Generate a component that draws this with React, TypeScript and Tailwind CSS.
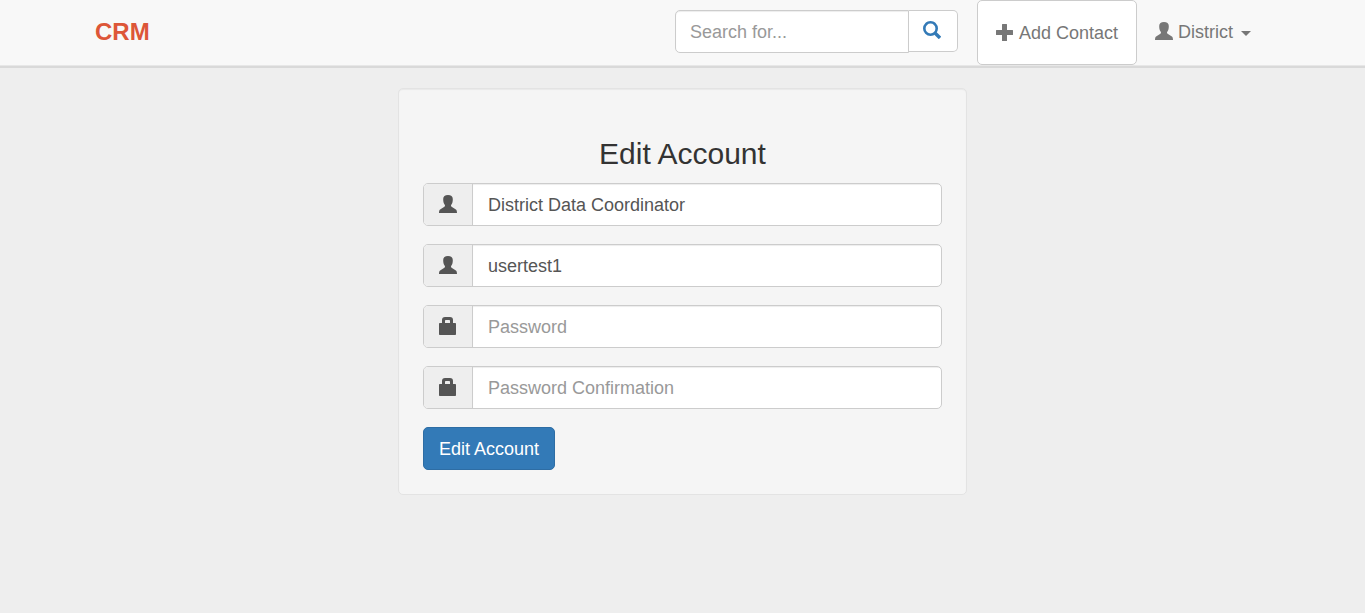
import React from "react";

type IconProps = { className?: string };

function UserIcon({ className = "" }: IconProps) {
  return (
    <svg viewBox="0 0 18 18" className={`size-[18px] shrink-0 ${className}`} fill="currentColor" aria-hidden="true">
      <path d="M9 0C6 0 4.200 1.300 4.200 4c0 2.600.3 4.300 1.500 5.700.5.700.4 1.500-.3 2L1.500 14.200C.4 14.900 0 15.800 0 18h18c0-2.200-.4-3.100-1.500-3.800l-3.900-2.500c-.7-.5-.8-1.300-.3-2 1.200-1.400 1.500-3.100 1.500-5.700C13.800 1.300 12 0 9 0Z" />
    </svg>
  );
}

function LockIcon({ className = "" }: IconProps) {
  return (
    <svg viewBox="0 0 18 18" className={`size-[18px] shrink-0 ${className}`} fill="currentColor" aria-hidden="true">
      <path
        fillRule="evenodd"
        d="M3 6V3a3 3 0 0 1 3-3h5a3 3 0 0 1 3 3v3h2.200a.8.8 0 0 1 .8.8v10.400a.8.8 0 0 1-.8.8H.8a.8.8 0 0 1-.8-.8V6.800A.8.8 0 0 1 .8 6Zm3 0h5V3.800a.8.8 0 0 0-.8-.8H6.800a.8.8 0 0 0-.8.8Z"
      />
    </svg>
  );
}

function SearchIcon() {
  return (
    <svg viewBox="0 0 18 18" className="size-[18px]" fill="none" stroke="currentColor" aria-hidden="true">
      <circle cx="7.500" cy="7.500" r="6.200" strokeWidth="2.600" />
      <path d="m12 12 5 5" strokeWidth="3.400" />
    </svg>
  );
}

function PlusIcon() {
  return (
    <svg viewBox="0 0 17 17" className="size-[17px] shrink-0" fill="currentColor" aria-hidden="true">
      <path d="M6.500 0h4a.5.5 0 0 1 .5.5V6h5.500a.5.5 0 0 1 .5.5v4a.5.5 0 0 1-.5.5H11v5.500a.5.5 0 0 1-.5.5h-4a.5.5 0 0 1-.5-.5V11H.5a.5.5 0 0 1-.5-.5v-4A.5.5 0 0 1 .5 6H6V.5a.5.5 0 0 1 .5-.5Z" />
    </svg>
  );
}

type FieldProps = {
  id: string;
  label: string;
  icon: React.ReactNode;
  type?: string;
  value?: string;
};

function Field({ id, label, icon, type = "text", value }: FieldProps) {
  return (
    <div className="flex h-[43px] overflow-hidden rounded-[5px] border border-[#ccc] bg-white">
      <label
        htmlFor={id}
        aria-label={label}
        className="flex w-[49px] shrink-0 items-center border-r border-[#ccc] bg-[#eee] pb-[2px] pl-[15px] text-[#555]"
      >
        {icon}
      </label>
      <input
        id={id}
        type={type}
        defaultValue={value}
        placeholder={label}
        className="min-w-0 flex-1 px-[15px] pt-px text-[18px] text-[#555] shadow-[inset_0_1px_1px_rgba(0,0,0,0.075)] outline-none placeholder:text-[#999]"
      />
    </div>
  );
}

export default function App() {
  return (
    <div className="min-h-screen bg-[#eee] font-['Liberation_Sans',Arial,sans-serif] text-[18px] leading-[25px] text-[#333]">
      <header className="border-b border-[#e7e7e7] bg-[#f8f8f8] shadow-[0_2px_0_#d9d9d9]">
        <nav className="mx-auto flex h-[65px] max-w-[1213px] items-center pr-[20px] pl-[19px]">
          <a href="#" className="mr-auto pb-[2px] text-[24px] font-bold text-[#dd5638]">
            CRM
          </a>
          <form className="mr-[19px] flex items-start pb-[2px]" onSubmit={(e) => e.preventDefault()}>
            <input
              type="search"
              aria-label="Search"
              placeholder="Search for..."
              className="h-[43px] w-[234px] rounded-l-[5px] border border-[#ccc] bg-white px-[14px] pt-px text-[#555] shadow-[inset_0_1px_1px_rgba(0,0,0,0.075)] outline-none placeholder:text-[#999]"
            />
            <button
              type="submit"
              aria-label="Submit search"
              className="flex h-[42px] w-[49px] items-center justify-center rounded-r-[5px] border border-l-0 border-[#ccc] bg-white pr-[2px] pb-[2px] text-[#337ab7]"
            >
              <SearchIcon />
            </button>
          </form>
          <button
            type="button"
            className="flex h-[65px] items-center gap-[6px] rounded-[5px] border border-[#ccc] bg-white px-[18px] text-[#777]"
          >
            <PlusIcon />
            <span className="pt-px">Add Contact</span>
          </button>
          <button type="button" aria-haspopup="menu" className="flex items-center px-[18px] text-[#777]">
            <UserIcon className="mr-[5px] mb-[4px]" />
            District
            <svg viewBox="0 0 10 5" className="mt-[2px] ml-[8px] h-[5px] w-[10px]" fill="currentColor" aria-hidden="true">
              <path d="M0 0h10L5 5Z" />
            </svg>
          </button>
        </nav>
      </header>
      <main className="mx-auto max-w-[569px] pt-[22px]">
        <form
          onSubmit={(e) => e.preventDefault()}
          className="rounded-[5px] border border-[#e3e3e3] bg-[#f5f5f5] p-[24px] shadow-[inset_0_1px_1px_rgba(0,0,0,0.05)]"
        >
          <h1 className="mt-6 mb-3 text-center text-[30px] leading-[34px]">Edit Account</h1>
          <div className="flex flex-col items-stretch gap-[18px]">
            <Field id="name" label="Name" icon={<UserIcon />} value="District Data Coordinator" />
            <Field id="username" label="Username" icon={<UserIcon />} value="usertest1" />
            <Field id="password" label="Password" type="password" icon={<LockIcon />} />
            <Field id="password-confirmation" label="Password Confirmation" type="password" icon={<LockIcon />} />
            <button
              type="submit"
              className="h-[43px] self-start rounded-[5px] border border-[#2e6da4] bg-[#337ab7] px-[15px] pt-px text-white"
            >
              Edit Account
            </button>
          </div>
        </form>
      </main>
    </div>
  );
}
